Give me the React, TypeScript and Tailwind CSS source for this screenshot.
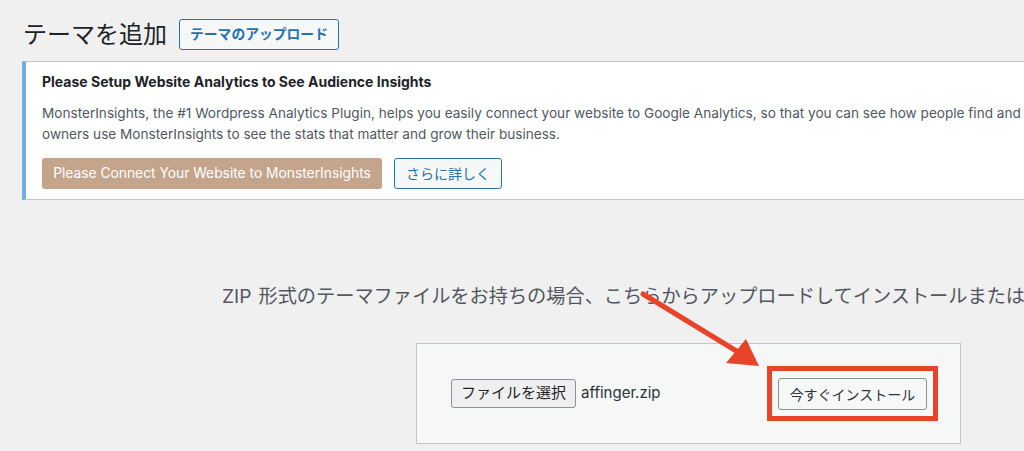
const font = '[font-family:Inter,"Noto_Sans_CJK_JP",sans-serif]';

function Arrow() {
  return (
    <svg className="absolute left-0 top-0 pointer-events-none" width="1024" height="451">
      <line x1="643" y1="294" x2="738" y2="352" stroke="#e9442a" strokeWidth="5" strokeLinecap="round" />
      <polygon points="759,366 726,363 746,339" fill="#e9442a" />
    </svg>
  );
}

export default function App() {
  return (
    <div className={`relative w-[1024px] h-[451px] overflow-hidden bg-[#f0f0f1] ${font}`}>
      <div className="flex items-center gap-[12px] pt-[19px] pl-[23px]">
        <h1 className="text-[24px] leading-[31px] text-[#1d2327] font-normal">テーマを追加</h1>
        <button className="h-[31px] px-[10px] rounded-[3px] border border-[#2271b1] bg-[#f6f7f7] text-[#2271b1] text-[13.8px] font-bold">
          テーマのアップロード
        </button>
      </div>

      <div className="mt-[11px] ml-[22px] w-[1100px] bg-white border border-[#c3c4c7] border-l-4 border-l-[#72aee6] pt-[10px] pb-[10px] px-[16px]">
        <h3 className="text-[14px] leading-[20px] font-bold text-[#1d2327]">
          Please Setup Website Analytics to See Audience Insights
        </h3>
        <p className="mt-[11px] text-[13.6px] leading-[21px] text-[#50575e] whitespace-nowrap">
          MonsterInsights, the #1 Wordpress Analytics Plugin, helps you easily connect your website to Google Analytics, so that you can see how people find and use your website. Over 3 million website
          <br />
          owners use MonsterInsights to see the stats that matter and grow their business.
        </p>
        <div className="mt-[13px] flex gap-[12px]">
          <button className="h-[31px] w-[340px] rounded-[3px] bg-[#c4a58c] text-white text-[13.8px]">
            Please Connect Your Website to MonsterInsights
          </button>
          <button className="h-[31px] w-[108px] rounded-[3px] border border-[#2271b1] bg-[#f6f7f7] text-[#2271b1] text-[14px]">
            さらに詳しく
          </button>
        </div>
      </div>

      <p className="mt-[82px] ml-[222px] text-[19.2px] leading-[28px] text-[#50575e] whitespace-nowrap">
        ZIP<span className="ml-[7px]">形式のテーマファイルをお持ちの場合、こちらからアップロードしてインストールまたは更新できます。</span>
      </p>

      <div className="mt-[33px] ml-[416px] w-[545px] h-[101px] bg-[#f6f7f7] border border-[#c3c4c7] flex items-center pl-[34px] pr-[22px]">
        <button className="h-[29px] px-[9px] rounded-[3px] border border-[#8f8f9d] bg-[#efefef] text-[15px] text-[#1d2327]">
          ファイルを選択
        </button>
        <span className="ml-[5px] text-[15px] text-[#2c3338]">affinger.zip</span>
        <div className="ml-auto border-[5px] border-[#e9442a] px-[6px] pt-[7px] pb-[6px]">
          <button className="h-[32px] w-[149px] rounded-[3px] border border-[#8c8f94] bg-[#f6f7f7] text-[14px] text-[#2c3338]">
            今すぐインストール
          </button>
        </div>
      </div>

      <Arrow />
    </div>
  );
}
